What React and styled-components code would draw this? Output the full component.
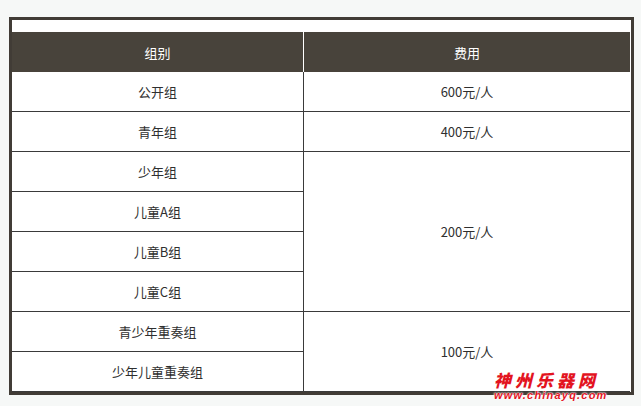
import React from 'react';
import styled, { createGlobalStyle } from 'styled-components';

const GlobalStyle = createGlobalStyle`
  html, body {
    margin: 0;
    padding: 0;
    background: #f6f8f7;
  }
  body {
    font-family: "Noto Sans CJK SC", "Noto Sans", sans-serif;
  }
`;

const Page = styled.div`
  position: relative;
  width: 641px;
  height: 406px;
  padding: 17px 0 0 9px;
  box-sizing: border-box;
`;

const Frame = styled.div`
  width: 619px;
  border: 3px solid #413c36;
  padding-top: 12px;
  background: #fff;
`;

const Table = styled.table`
  width: 618px;
  border-collapse: separate;
  border-spacing: 0;
  table-layout: fixed;
  font-size: 13px;
  color: #2f2f2f;
`;

const HeadCell = styled.th`
  height: 40px;
  padding: 0;
  background: #48433b;
  color: #fff;
  font-weight: 400;
  text-align: center;
  vertical-align: middle;
  border-right: ${p => (p.$first ? '1px solid #fff' : 'none')};
  width: ${p => (p.$first ? '291px' : 'auto')};
`;

const Cell = styled.td`
  height: 39px;
  padding: 0;
  text-align: center;
  vertical-align: middle;
  border-bottom: 1px solid #3a3a3a;
  border-right: ${p => (p.$first ? '1px solid #3a3a3a' : 'none')};
`;

const Watermark = styled.div`
  position: absolute;
  left: 494px;
  top: 371px;
  color: #e3141f;
  font-style: italic;
  text-shadow: 0 0 2px #fff, 0 0 2px #fff, 0 0 1px #fff;
`;

const MarkTitle = styled.div`
  font-family: "Noto Sans CJK SC", sans-serif;
  font-weight: 900;
  font-size: 17px;
  line-height: 17px;
  height: 17px;
  letter-spacing: 4px;
`;

const MarkUrl = styled.div`
  margin-top: 2px;
  font-family: "Liberation Sans", sans-serif;
  font-weight: 700;
  font-size: 11px;
  line-height: 11px;
  letter-spacing: 1.2px;
`;

const rows = [
  { group: '公开组', fee: '600元/人', span: 1 },
  { group: '青年组', fee: '400元/人', span: 1 },
  { group: '少年组', fee: '200元/人', span: 4 },
  { group: '儿童A组' },
  { group: '儿童B组' },
  { group: '儿童C组' },
  { group: '青少年重奏组', fee: '100元/人', span: 2 },
  { group: '少年儿童重奏组' },
];

export default function App() {
  return (
    <Page>
      <GlobalStyle />
      <Frame>
        <Table>
          <thead>
            <tr>
              <HeadCell $first>组别</HeadCell>
              <HeadCell>费用</HeadCell>
            </tr>
          </thead>
          <tbody>
            {rows.map(r => (
              <tr key={r.group}>
                <Cell $first>{r.group}</Cell>
                {r.fee && <Cell rowSpan={r.span}>{r.fee}</Cell>}
              </tr>
            ))}
          </tbody>
        </Table>
      </Frame>
      <Watermark>
        <MarkTitle>神州乐器网</MarkTitle>
        <MarkUrl>www.chinayq.com</MarkUrl>
      </Watermark>
    </Page>
  );
}
